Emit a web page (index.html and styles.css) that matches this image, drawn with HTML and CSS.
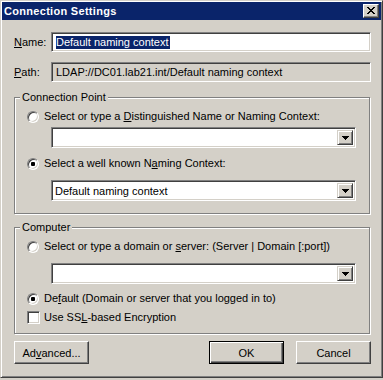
FILE: index.html
```html
<!DOCTYPE html>
<html>
<head>
<meta charset="utf-8">
<link rel="stylesheet" href="styles.css">
</head>
<body>
<div class="window">
  <div class="titlebar">
    <span class="title">Connection Settings</span>
    <span class="close-btn">
      <svg width="8" height="7" viewBox="0 0 8 7" shape-rendering="crispEdges">
        <path d="M0 0h2v1H0zM6 0h2v1H6zM1 1h2v1H1zM5 1h2v1H5zM2 2h4v1H2zM3 3h2v1H3zM2 4h4v1H2zM1 5h2v1H1zM5 5h2v1H5zM0 6h2v1H0zM6 6h2v1H6z" fill="#000"/>
      </svg>
    </span>
  </div>
  <div class="content">
    <div class="field-row">
      <span class="field-label"><u>N</u>ame:</span>
      <div class="edit"><span class="sel">Default naming context</span></div>
    </div>
    <div class="field-row path-row">
      <span class="field-label"><u>P</u>ath:</span>
      <div class="edit disabled">LDAP://DC01.lab21.int/Default naming context</div>
    </div>

    <div class="group group-point">
      <span class="legend">Connection Point</span>
      <div class="option opt-first">
        <span class="radio"></span>
        <span class="opt-text">Select or type a <u>D</u>istinguished Name or Naming Context:</span>
      </div>
      <div class="combo combo-first">
        <span class="combo-text"></span>
        <span class="drop"><svg width="7" height="4" viewBox="0 0 7 4" shape-rendering="crispEdges"><path d="M0 0h7v1H0zM1 1h5v1H1zM2 2h3v1H2zM3 3h1v1H3z" fill="#000"/></svg></span>
      </div>
      <div class="option opt-second">
        <span class="radio checked"></span>
        <span class="opt-text">Select a well known N<u>a</u>ming Context:</span>
      </div>
      <div class="combo combo-second">
        <span class="combo-text">Default naming context</span>
        <span class="drop"><svg width="7" height="4" viewBox="0 0 7 4" shape-rendering="crispEdges"><path d="M0 0h7v1H0zM1 1h5v1H1zM2 2h3v1H2zM3 3h1v1H3z" fill="#000"/></svg></span>
      </div>
    </div>

    <div class="group group-computer">
      <span class="legend">Computer</span>
      <div class="option opt-first">
        <span class="radio"></span>
        <span class="opt-text">Select or type a domain or <u>s</u>erver: (Server | Domain [:port])</span>
      </div>
      <div class="combo combo-third">
        <span class="combo-text"></span>
        <span class="drop"><svg width="7" height="4" viewBox="0 0 7 4" shape-rendering="crispEdges"><path d="M0 0h7v1H0zM1 1h5v1H1zM2 2h3v1H2zM3 3h1v1H3z" fill="#000"/></svg></span>
      </div>
      <div class="option opt-default">
        <span class="radio checked"></span>
        <span class="opt-text">De<u>f</u>ault (Domain or server that you logged in to)</span>
      </div>
      <div class="option opt-ssl">
        <span class="checkbox"></span>
        <span class="opt-text">Use SS<u>L</u>-based Encryption</span>
      </div>
    </div>

    <div class="buttons">
      <span class="btn">Ad<u>v</u>anced...</span>
      <span class="spacer"></span>
      <span class="btn btn-default">OK</span>
      <span class="btn">Cancel</span>
    </div>
  </div>
</div>
</body>
</html>
```
FILE: styles.css
```css
html, body {
  margin: 0;
  padding: 0;
  background: #d4d0c8;
}
body {
  font-family: "Liberation Sans", Arial, sans-serif;
  font-size: 11px;
  color: #000;
}
.window {
  box-sizing: border-box;
  width: 383px;
  height: 378px;
  background: #d4d0c8;
  border: 1px solid;
  border-color: #d4d0c8 #404040 #404040 #d4d0c8;
  box-shadow: inset 1px 1px #fff, inset -1px -1px #808080;
  padding: 1px;
}
.titlebar {
  height: 18px;
  background: #0a246a;
  display: flex;
  align-items: center;
  justify-content: space-between;
}
.title {
  color: #fff;
  font-weight: bold;
  font-size: 11px;
  letter-spacing: 0.3px;
  padding-left: 2px;
  line-height: 18px;
}
.close-btn {
  box-sizing: border-box;
  width: 16px;
  height: 14px;
  margin-right: 2px;
  background: #d4d0c8;
  border: 1px solid;
  border-color: #fff #404040 #404040 #fff;
  box-shadow: inset -1px -1px #808080;
  display: flex;
  align-items: center;
  justify-content: center;
  padding: 0 1px 1px 0;
}
.close-btn svg { display: block; }
.content {
  padding: 12px 10px 0 12px;
}
.field-row {
  display: flex;
  align-items: center;
  height: 20px;
}
.path-row { margin-top: 10px; }
.field-label {
  width: 37px;
  flex: none;
}
.edit {
  box-sizing: border-box;
  flex: 1;
  height: 20px;
  background: #fff;
  border: 1px solid;
  border-color: #808080 #fff #fff #808080;
  box-shadow: inset 1px 1px #404040, inset -1px -1px #d4d0c8;
  padding: 0 3px 0 4px;
  display: flex;
  align-items: center;
  white-space: nowrap;
}
.edit.disabled {
  background: #d4d0c8;
}
.sel {
  background: #0a246a;
  color: #fff;
  line-height: 13px;
  padding: 0 1px 0 0;
}
.group {
  position: relative;
  box-sizing: border-box;
  width: 356px;
  border: 1px solid #808080;
  box-shadow: inset 1px 1px #fff, 1px 1px 0 #fff;
}
.group-point {
  margin-top: 15px;
  height: 117px;
  padding-top: 12px;
}
.group-computer {
  margin-top: 13px;
  height: 107px;
  padding-top: 12px;
}
.legend {
  position: absolute;
  top: -7px;
  left: 5px;
  padding: 0 2px;
  background: #d4d0c8;
  line-height: 13px;
}
.option {
  display: flex;
  align-items: center;
  height: 13px;
  padding-left: 12px;
  white-space: nowrap;
}
.opt-text {
  margin-left: 5px;
  line-height: 13px;
}
.radio {
  position: relative;
  box-sizing: border-box;
  width: 12px;
  height: 12px;
  flex: none;
  border-radius: 50%;
  background: #fff;
  border: 1px solid;
  border-color: #808080 #fff #fff #808080;
  box-shadow: inset 1px 1px #404040, inset -1px -1px #d4d0c8;
}
.radio.checked::after {
  content: "";
  position: absolute;
  left: 3px;
  top: 3px;
  width: 4px;
  height: 4px;
  border-radius: 1px;
  background: #000;
}
.checkbox {
  box-sizing: border-box;
  width: 13px;
  height: 13px;
  flex: none;
  background: #fff;
  border: 1px solid;
  border-color: #808080 #fff #fff #808080;
  box-shadow: inset 1px 1px #404040, inset -1px -1px #d4d0c8;
}
.opt-ssl .opt-text { margin-left: 4px; }
.combo {
  box-sizing: border-box;
  width: 305px;
  height: 21px;
  margin-left: 36px;
  background: #fff;
  border: 1px solid;
  border-color: #808080 #fff #fff #808080;
  box-shadow: inset 1px 1px #404040, inset -1px -1px #d4d0c8;
  padding: 2px 2px 2px 2px;
  display: flex;
  align-items: stretch;
}
.combo-text {
  flex: 1;
  display: flex;
  align-items: center;
  padding-left: 1px;
  white-space: nowrap;
}
.drop {
  box-sizing: border-box;
  width: 16px;
  flex: none;
  background: #d4d0c8;
  border: 1px solid;
  border-color: #d4d0c8 #404040 #404040 #d4d0c8;
  box-shadow: inset 1px 1px #fff, inset -1px -1px #808080;
  display: flex;
  align-items: center;
  justify-content: center;
}
.drop svg { display: block; }
.combo-first { margin-top: 4px; }
.group-point .opt-second { margin-top: 9px; }
.combo-second { margin-top: 10px; }
.combo-third { margin-top: 10px; }
.opt-default { margin-top: 8px; }
.opt-ssl { margin-top: 6px; }
.buttons {
  display: flex;
  margin-top: 7px;
  width: 357px;
}
.spacer { flex: 1; }
.btn {
  box-sizing: border-box;
  width: 75px;
  height: 23px;
  display: flex;
  align-items: center;
  justify-content: center;
  background: #d4d0c8;
  border: 1px solid;
  border-color: #fff #404040 #404040 #fff;
  box-shadow: inset -1px -1px #808080;
}
.btn-default {
  border-color: #000;
  box-shadow: inset 1px 1px #fff, inset -1px -1px #404040, inset -2px -2px #808080;
  margin-right: 12px;
}
u { text-decoration: underline; text-underline-offset: 1px; }
```
